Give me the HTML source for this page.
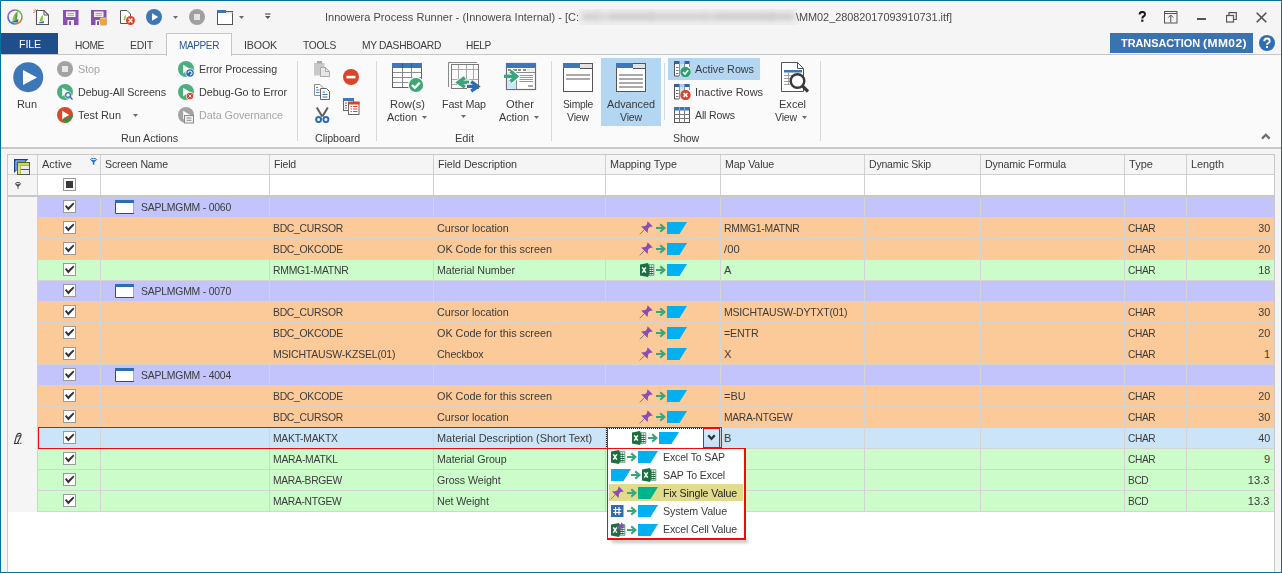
<!DOCTYPE html>
<html><head><meta charset="utf-8"><title>Innowera Process Runner</title>
<style>
html,body{margin:0;padding:0;}
body{width:1282px;height:573px;position:relative;overflow:hidden;background:#f5f5f5;font-family:'Liberation Sans', sans-serif;}
svg{display:block;}
</style></head><body>
<div style="position:absolute;left:0px;top:0px;width:1282px;height:573px;background:#f5f5f5;"></div>
<div style="position:absolute;left:1px;top:55px;width:1280px;height:92px;background:#fafafa;"></div>
<div style="position:absolute;left:1px;top:54px;width:1280px;height:1px;background:#c6c6c6;"></div>
<div style="position:absolute;left:1px;top:147px;width:1280px;height:2px;background:#c8c8c8;"></div>
<div style="position:absolute;left:1px;top:149px;width:1280px;height:423px;background:#f4f4f4;"></div>
<svg style="position:absolute;left:7px;top:9px;" width="16" height="16" viewBox="0 0 16 16"><path d="M8 1 A7 7 0 0 0 1 8" fill="none" stroke="#8e5fd6" stroke-width="1.6"/><path d="M8 1 A7 7 0 0 1 15 8" fill="none" stroke="#5fb157" stroke-width="1.6"/><path d="M15 8 A7 7 0 0 1 8 15" fill="none" stroke="#d9782d" stroke-width="1.6"/><path d="M8 15 A7 7 0 0 1 1 8" fill="none" stroke="#3a78c4" stroke-width="1.6"/><path d="M5.5 12 Q5.2 6.5 10.5 2.5 Q10.4 8 9.5 11.5 Z" fill="#8cc63f"/><path d="M8.5 5 Q9.5 4 10.5 2.5 Q10.4 8 9.5 11.5 L8.2 11.5 Z" fill="#5a9e2f"/><path d="M4.2 13 L11.5 10 L11 13.5 L4.2 13.5 Z" fill="#2e6db4"/></svg>
<svg style="position:absolute;left:33px;top:9px;" width="16" height="16" viewBox="0 0 16 16"><path d="M3.5 1.5 H11 L15.5 6 V15.5 H3.5 Z" fill="#fff" stroke="#555" stroke-width="1.1"/><path d="M11 1.5 V6 H15.5" fill="none" stroke="#555" stroke-width="1"/><path d="M6.8 12.5 Q6.6 8.5 10.2 5.8 Q10.1 9.5 9.4 12.2 Z" fill="#8cc63f"/><path d="M5.8 13.6 L11 12 L10.7 14.2 L5.8 14.2 Z" fill="#2e6db4"/><path d="M0.5 1 L2.5 3 M2.2 0 V1.8 M0 3.5 H1.8 M4.5 0.2 V1.6" stroke="#f07a4a" stroke-width="0.9"/></svg>
<svg style="position:absolute;left:63px;top:10px;" width="16" height="16" viewBox="0 0 16 16"><path d="M0 0 H15.5 V15 H0 Z" fill="#8a4fb4"/><rect x="3" y="1.5" width="9.5" height="5.5" fill="#f0f0f0"/><path d="M4.5 3.5 H11 M4.5 5.3 H11" stroke="#a0a0a0" stroke-width="0.9"/><rect x="4.5" y="10" width="6.5" height="5" fill="#f0f0f0"/><rect x="6" y="11.2" width="2" height="3.8" fill="#8a4fb4"/></svg>
<svg style="position:absolute;left:91px;top:10px;" width="16" height="16" viewBox="0 0 16 16"><path d="M0 0 H15.5 V15 H0 Z" fill="#8a4fb4"/><rect x="3" y="1.5" width="9.5" height="5.5" fill="#f0f0f0"/><path d="M4.5 3.5 H11 M4.5 5.3 H11" stroke="#a0a0a0" stroke-width="0.9"/><rect x="4.5" y="10" width="6.5" height="5" fill="#f0f0f0"/><rect x="6" y="11.2" width="2" height="3.8" fill="#8a4fb4"/><path d="M8.5 9 H16 V10.5 L15 15.5 H9.5 L8.5 10.5 Z" fill="#e7a743"/><path d="M8.5 9 L10 7.5 H14.5 L16 9 Z" fill="#f3c270"/></svg>
<svg style="position:absolute;left:119px;top:9px;" width="16" height="16" viewBox="0 0 16 16"><path d="M1.5 1.5 H8 L11.5 5 V14.5 H1.5 Z" fill="#fff" stroke="#555" stroke-width="1"/><path d="M4.5 11 Q4.5 7.5 7 5.8 Q6.8 8.5 6.3 11 Z" fill="#8cc63f"/><circle cx="11.5" cy="11.5" r="4.5" fill="#d9452b"/><path d="M9.6 9.6 L13.4 13.4 M13.4 9.6 L9.6 13.4" stroke="#fff" stroke-width="1.4"/></svg>
<svg style="position:absolute;left:146px;top:9px;" width="16" height="16" viewBox="0 0 16 16"><circle cx="8" cy="8" r="8" fill="#3d77b7"/><path d="M6 4.2 V11.8 L12.2 8 Z" fill="#fff"/></svg>
<svg style="position:absolute;left:173px;top:16px;" width="5" height="3" viewBox="0 0 5 3"><path d="M0 0 H5 L2.5 3 Z" fill="#6a6a6a"/></svg>
<svg style="position:absolute;left:189px;top:9px;" width="16" height="16" viewBox="0 0 16 16"><circle cx="8" cy="8" r="8" fill="#a0a0a0"/><rect x="5" y="5" width="6" height="6" fill="#e4e4e4"/></svg>
<svg style="position:absolute;left:217px;top:10px;" width="17" height="16" viewBox="0 0 17 16"><rect x="0.5" y="1.5" width="15" height="13" fill="#fff" stroke="#555" stroke-width="1"/><rect x="0" y="0" width="9" height="3" fill="#3d77b7"/><rect x="9" y="2" width="6.5" height="1.5" fill="#ddd"/></svg>
<svg style="position:absolute;left:239px;top:16px;" width="5" height="3" viewBox="0 0 5 3"><path d="M0 0 H5 L2.5 3 Z" fill="#6a6a6a"/></svg>
<svg style="position:absolute;left:265px;top:13px;" width="6" height="7" viewBox="0 0 6 7"><path d="M0 1 H5.5" stroke="#555" stroke-width="1.2"/><path d="M0 3 H5.5 L2.75 6 Z" fill="#555"/></svg>
<div style="position:absolute;left:325px;top:11px;font:11px 'Liberation Sans', sans-serif;line-height:13px;white-space:pre;color:#4a4a4a;transform:scaleX(1.0021);transform-origin:left;letter-spacing:0.007px;">Innowera Process Runner - (Innowera Internal) - [C:</div>
<div style="position:absolute;left:579px;top:9px;width:218px;height:16px;background:#eeeeee;"></div>
<div style="position:absolute;left:579px;top:9px;width:218px;height:16px;background:transparent;overflow:hidden;"></div>
<div style="position:absolute;left:582px;top:13px;width:18px;height:7px;background:#d0d0d0;filter:blur(2.5px);"></div>
<div style="position:absolute;left:596px;top:13px;width:12px;height:7px;background:#d8d8d8;filter:blur(2.5px);"></div>
<div style="position:absolute;left:608px;top:13px;width:46px;height:7px;background:#cdcdcd;filter:blur(2.5px);"></div>
<div style="position:absolute;left:650px;top:13px;width:58px;height:7px;background:#d2d2d2;filter:blur(2.5px);"></div>
<div style="position:absolute;left:704px;top:13px;width:14px;height:7px;background:#d6d6d6;filter:blur(2.5px);"></div>
<div style="position:absolute;left:716px;top:13px;width:58px;height:7px;background:#cccccc;filter:blur(2.5px);"></div>
<div style="position:absolute;left:770px;top:13px;width:24px;height:7px;background:#cfcfcf;filter:blur(2.5px);"></div>
<div style="position:absolute;left:796px;top:11px;font:11px 'Liberation Sans', sans-serif;line-height:13px;white-space:pre;color:#4a4a4a;transform:scaleX(0.9909);transform-origin:left;letter-spacing:-0.035px;">\MM02_28082017093910731.itf]</div>
<svg style="position:absolute;left:1138px;top:11px;" width="9" height="11" viewBox="0 0 9 11"><path d="M1.6 3.6 Q1.6 0.9 4.3 0.9 Q7 0.9 7 3.3 Q7 4.7 5.4 5.5 Q4.3 6.1 4.3 7.4" fill="none" stroke="#1a1a1a" stroke-width="2"/><rect x="3.2" y="8.6" width="2.2" height="2.2" fill="#1a1a1a"/></svg>
<svg style="position:absolute;left:1164px;top:11px;" width="14" height="13" viewBox="0 0 14 13"><rect x="0.5" y="0.5" width="12.5" height="11.5" fill="none" stroke="#555"/><path d="M0.5 2.5 H13" stroke="#555"/><path d="M6.75 4 V11.5 M4.2 6.6 L6.75 4 L9.3 6.6" fill="none" stroke="#555" stroke-width="1"/></svg>
<div style="position:absolute;left:1197px;top:18px;width:9px;height:2px;background:#555;"></div>
<svg style="position:absolute;left:1226px;top:12px;" width="11" height="11" viewBox="0 0 11 11"><rect x="0.5" y="3.5" width="7" height="6.5" fill="none" stroke="#555" stroke-width="1.2"/><path d="M3 3.5 V0.7 H10.3 V7.5 H7.5" fill="none" stroke="#555" stroke-width="1.2"/></svg>
<svg style="position:absolute;left:1256px;top:12px;" width="11" height="11" viewBox="0 0 11 11"><path d="M0.7 0.7 L10.3 10.3 M10.3 0.7 L0.7 10.3" stroke="#505050" stroke-width="1.6"/></svg>
<div style="position:absolute;left:1px;top:33px;width:57px;height:21px;background:#1f4e8d;"></div>
<div style="position:absolute;left:19px;top:38px;font:11px 'Liberation Sans', sans-serif;line-height:13px;white-space:pre;color:#ffffff;transform:scaleX(0.9678);transform-origin:left;letter-spacing:-0.125px;">FILE</div>
<div style="position:absolute;left:75px;top:39px;font:11px 'Liberation Sans', sans-serif;line-height:13px;white-space:pre;color:#3b3b3b;transform:scaleX(0.9254);transform-origin:left;letter-spacing:-0.416px;">HOME</div>
<div style="position:absolute;left:130px;top:39px;font:11px 'Liberation Sans', sans-serif;line-height:13px;white-space:pre;color:#3b3b3b;transform:scaleX(0.9498);transform-origin:left;letter-spacing:-0.212px;">EDIT</div>
<div style="position:absolute;left:166px;top:33px;width:66px;height:23px;box-sizing:border-box;border:1px solid #c6c6c6;background:#fafafa;border-bottom:none;"></div>
<div style="position:absolute;left:179px;top:39px;font:11px 'Liberation Sans', sans-serif;line-height:13px;white-space:pre;color:#2b5797;transform:scaleX(0.9140);transform-origin:left;letter-spacing:-0.451px;">MAPPER</div>
<div style="position:absolute;left:244px;top:39px;font:11px 'Liberation Sans', sans-serif;line-height:13px;white-space:pre;color:#3b3b3b;transform:scaleX(0.9679);transform-origin:left;letter-spacing:-0.150px;">IBOOK</div>
<div style="position:absolute;left:303px;top:39px;font:11px 'Liberation Sans', sans-serif;line-height:13px;white-space:pre;color:#3b3b3b;transform:scaleX(0.9322);transform-origin:left;letter-spacing:-0.339px;">TOOLS</div>
<div style="position:absolute;left:362px;top:39px;font:11px 'Liberation Sans', sans-serif;line-height:13px;white-space:pre;color:#3b3b3b;transform:scaleX(0.9307);transform-origin:left;letter-spacing:-0.347px;">MY DASHBOARD</div>
<div style="position:absolute;left:466px;top:39px;font:11px 'Liberation Sans', sans-serif;line-height:13px;white-space:pre;color:#3b3b3b;transform:scaleX(0.9196);transform-origin:left;letter-spacing:-0.391px;">HELP</div>
<div style="position:absolute;left:1110px;top:33px;width:143px;height:20px;background:#3a73b1;"></div>
<div style="position:absolute;left:1121px;top:37px;font:bold 11px 'Liberation Sans', sans-serif;line-height:13px;white-space:pre;color:#ffffff;transform:scaleX(0.9920);transform-origin:left;letter-spacing:-0.039px;">TRANSACTION</div>
<div style="position:absolute;left:1203px;top:37px;font:bold 11px 'Liberation Sans', sans-serif;line-height:13px;white-space:pre;color:#ffffff;transform:scaleX(1.0938);transform-origin:left;letter-spacing:0.389px;">(MM02)</div>
<svg style="position:absolute;left:1259px;top:35px;" width="16" height="16" viewBox="0 0 16 16"><circle cx="8" cy="8" r="8" fill="#2f6db3"/><path d="M5.3 6.2 Q5.3 3.5 8 3.5 Q10.7 3.5 10.7 5.9 Q10.7 7.3 9.1 8.1 Q8 8.7 8 9.8" fill="none" stroke="#fff" stroke-width="1.9"/><rect x="7" y="11" width="2" height="2" fill="#fff"/></svg>
<div style="position:absolute;left:601px;top:58px;width:60px;height:68px;background:#b3d6f2;"></div>
<div style="position:absolute;left:668px;top:58px;width:92px;height:22px;background:#b3d6f2;"></div>
<svg style="position:absolute;left:13px;top:62px;" width="31" height="31" viewBox="0 0 31 31"><circle cx="15.2" cy="15.2" r="15" fill="#3d77b7"/><path d="M10 8 V23 L24 15.5 Z" fill="#fff"/></svg>
<div style="position:absolute;left:17px;top:98px;font:11px 'Liberation Sans', sans-serif;line-height:13px;white-space:pre;color:#3b3b3b;transform:scaleX(0.9944);transform-origin:left;letter-spacing:-0.025px;">Run</div>
<svg style="position:absolute;left:57px;top:61px;" width="16" height="16" viewBox="0 0 16 16"><circle cx="8" cy="8" r="8" fill="#a3a3a3"/><rect x="5" y="5" width="6" height="6" fill="#e8e8e8"/></svg>
<svg style="position:absolute;left:57px;top:84px;" width="17" height="17" viewBox="0 0 17 17"><circle cx="8" cy="8" r="8" fill="#4cae7f"/><path d="M5.2 3.8 V12.4 L8 10.2 L12.2 8 Z" fill="#fff"/><circle cx="11" cy="11" r="3.5" fill="#fff"/><circle cx="11" cy="11" r="2.4" fill="none" stroke="#2f6db3" stroke-width="1.2"/><path d="M12.8 12.8 L15.5 15.5" stroke="#2f6db3" stroke-width="1.5"/></svg>
<svg style="position:absolute;left:57px;top:107px;" width="17" height="17" viewBox="0 0 17 17"><circle cx="8" cy="8" r="8" fill="#d64a2a"/><path d="M5.2 3.8 V12.4 L8 10.2 L12.2 8 Z" fill="#fff"/><path d="M7 11.5 L9.5 14.5 L15.5 8.5" fill="none" stroke="#1e9a4a" stroke-width="2.2"/></svg>
<svg style="position:absolute;left:178px;top:61px;" width="17" height="17" viewBox="0 0 17 17"><circle cx="8" cy="8" r="8" fill="#4cae7f"/><path d="M5.2 3.8 V12.4 L8 10.2 L12.2 8 Z" fill="#fff"/><circle cx="12" cy="12" r="4.6" fill="#fff"/><circle cx="12" cy="12" r="3.8" fill="#2f6db3"/><path d="M10 12 A2 2 0 1 1 12 14" fill="none" stroke="#fff" stroke-width="1"/></svg>
<svg style="position:absolute;left:178px;top:84px;" width="17" height="17" viewBox="0 0 17 17"><circle cx="8" cy="8" r="8" fill="#4cae7f"/><path d="M5.2 3.8 V12.4 L8 10.2 L12.2 8 Z" fill="#fff"/><circle cx="12" cy="12" r="4" fill="#fff"/><circle cx="12" cy="12" r="3.3" fill="#d9452b"/><path d="M10.6 10.6 L13.4 13.4 M13.4 10.6 L10.6 13.4" stroke="#fff" stroke-width="1"/></svg>
<svg style="position:absolute;left:178px;top:107px;" width="17" height="17" viewBox="0 0 17 17"><circle cx="8" cy="8" r="8" fill="#a3a3a3"/><path d="M5.2 3.8 V12.4 L8 10.2 L12.2 8 Z" fill="#fff"/><rect x="6.5" y="8.5" width="9" height="7.5" fill="#f3f3f3" stroke="#8a8a8a" stroke-width="1"/><path d="M8.5 11 H13.5 M8.5 13.3 H13.5" stroke="#8a8a8a" stroke-width="1"/></svg>
<svg style="position:absolute;left:314px;top:61px;" width="17" height="16" viewBox="0 0 17 16"><rect x="0" y="2" width="10.5" height="12.5" fill="#c9c9c9"/><rect x="3" y="0" width="5" height="2.5" fill="#a8a8a8"/><path d="M6.5 6.5 H11.5 L15.5 10.5 V15.5 H6.5 Z" fill="#e6e6e6" stroke="#aaaaaa"/><path d="M11.5 6.5 V10.5 H15.5" fill="none" stroke="#aaaaaa"/></svg>
<svg style="position:absolute;left:314px;top:84px;" width="17" height="17" viewBox="0 0 17 17"><path d="M0.5 0.5 H6 L9 3.5 V11.5 H0.5 Z" fill="#fff" stroke="#8a8a8a"/><path d="M2 3.5 H4 M2 6 H5.5 M2 8.5 H5.5" stroke="#4a86cf" stroke-width="1"/><path d="M6.5 4.5 H12.5 L15.5 7.5 V15.5 H6.5 Z" fill="#fff" stroke="#666"/><path d="M8.5 8 H11 M8.5 10.5 H13.5 M8.5 13 H13.5" stroke="#3d77b7" stroke-width="1.1"/></svg>
<svg style="position:absolute;left:315px;top:107px;" width="15" height="16" viewBox="0 0 15 16"><path d="M1.8 0.5 L7.2 9.5 M12.8 0.5 L7.4 9.5" stroke="#5f5f5f" stroke-width="2"/><circle cx="3.6" cy="12.6" r="2.5" fill="none" stroke="#2f6db3" stroke-width="2"/><circle cx="10.9" cy="12.6" r="2.5" fill="none" stroke="#2f6db3" stroke-width="2"/></svg>
<svg style="position:absolute;left:343px;top:69px;" width="16" height="16" viewBox="0 0 16 16"><circle cx="8" cy="8" r="8" fill="#d9452b"/><rect x="3.5" y="6.8" width="9" height="2.6" fill="#fff"/></svg>
<svg style="position:absolute;left:343px;top:98px;" width="17" height="17" viewBox="0 0 17 17"><rect x="0.5" y="0.5" width="10" height="12" fill="#fff" stroke="#666"/><rect x="0" y="0" width="11" height="3" fill="#3d77b7"/><path d="M2 5 H4 M2 7.5 H4 M2 10 H4" stroke="#666"/><rect x="5.5" y="4.5" width="10.5" height="12" fill="#fff" stroke="#666"/><rect x="5" y="3.5" width="11.5" height="3" fill="#d9452b"/><path d="M7.5 8.5 H8.8 M10 8.5 H14.5 M7.5 11 H8.8 M10 11 H14.5 M7.5 13.5 H8.8 M10 13.5 H14.5" stroke="#d9452b" stroke-width="1.1"/></svg>
<svg style="position:absolute;left:674px;top:61px;" width="17" height="16" viewBox="0 0 17 16"><rect x="0" y="0" width="16" height="15" fill="#fff"/><rect x="5" y="0" width="6" height="15" fill="#cfe3f7"/><rect x="0" y="0" width="5" height="3" fill="#2f62a8"/><rect x="11" y="0" width="5" height="3" fill="#2f62a8"/><rect x="5" y="0" width="6" height="3" fill="#a9cbee"/><path d="M0.5 0 V15 H5" fill="none" stroke="#555" stroke-width="1"/><path d="M5.5 0 V15 M10.5 0 V9 M15.5 0 V6" stroke="#6f95c6" stroke-width="1"/><path d="M2 6.5 H4.5 M2 9.5 H4.5 M2 12.5 H4.5" stroke="#777" stroke-width="1"/><circle cx="11.5" cy="11" r="5.2" fill="#2fa06a"/><path d="M9 11 L11 13 L14.2 9.2" fill="none" stroke="#fff" stroke-width="1.6"/></svg>
<svg style="position:absolute;left:674px;top:84px;" width="17" height="16" viewBox="0 0 17 16"><rect x="0" y="0" width="16" height="15" fill="#fff"/><rect x="5" y="0" width="6" height="15" fill="#cfe3f7"/><rect x="0" y="0" width="5" height="3" fill="#2f62a8"/><rect x="11" y="0" width="5" height="3" fill="#2f62a8"/><rect x="5" y="0" width="6" height="3" fill="#a9cbee"/><path d="M0.5 0 V15 H5" fill="none" stroke="#555" stroke-width="1"/><path d="M5.5 0 V15 M10.5 0 V9 M15.5 0 V6" stroke="#6f95c6" stroke-width="1"/><path d="M2 6.5 H4.5 M2 9.5 H4.5 M2 12.5 H4.5" stroke="#777" stroke-width="1"/><circle cx="11.5" cy="11" r="5.2" fill="#d9452b"/><path d="M9.6 9.1 L13.4 12.9 M13.4 9.1 L9.6 12.9" stroke="#fff" stroke-width="1.5"/></svg>
<svg style="position:absolute;left:674px;top:107px;" width="17" height="16" viewBox="0 0 17 16"><rect x="0.5" y="0.5" width="15" height="15" fill="#fff" stroke="#555"/><rect x="0" y="0" width="16" height="3.5" fill="#3d77b7"/><path d="M0 7.5 H16 M0 11.5 H16 M5.5 3 V16 M10.5 3 V16" stroke="#777" stroke-width="1"/><path d="M5.5 0 V3.5 M10.5 0 V3.5" stroke="#7fa9d8" stroke-width="1"/></svg>
<div style="position:absolute;left:78px;top:63px;font:11px 'Liberation Sans', sans-serif;line-height:13px;white-space:pre;color:#a6a6a6;transform:scaleX(0.9829);transform-origin:left;letter-spacing:-0.065px;">Stop</div>
<div style="position:absolute;left:78px;top:86px;font:11px 'Liberation Sans', sans-serif;line-height:13px;white-space:pre;color:#3b3b3b;transform:scaleX(0.9755);transform-origin:left;letter-spacing:-0.089px;">Debug-All Screens</div>
<div style="position:absolute;left:78px;top:109px;font:11px 'Liberation Sans', sans-serif;line-height:13px;white-space:pre;color:#3b3b3b;transform:scaleX(0.9942);transform-origin:left;letter-spacing:-0.021px;">Test Run</div>
<svg style="position:absolute;left:133px;top:114px;" width="5" height="3" viewBox="0 0 5 3"><path d="M0 0 H5 L2.5 3 Z" fill="#6a6a6a"/></svg>
<div style="position:absolute;left:121px;top:132px;font:11px 'Liberation Sans', sans-serif;line-height:13px;white-space:pre;color:#3b3b3b;transform:scaleX(0.9825);transform-origin:left;letter-spacing:-0.062px;">Run Actions</div>
<div style="position:absolute;left:199px;top:63px;font:11px 'Liberation Sans', sans-serif;line-height:13px;white-space:pre;color:#3b3b3b;transform:scaleX(0.9710);transform-origin:left;letter-spacing:-0.099px;">Error Processing</div>
<div style="position:absolute;left:199px;top:86px;font:11px 'Liberation Sans', sans-serif;line-height:13px;white-space:pre;color:#3b3b3b;transform:scaleX(0.9834);transform-origin:left;letter-spacing:-0.059px;">Debug-Go to Error</div>
<div style="position:absolute;left:199px;top:109px;font:11px 'Liberation Sans', sans-serif;line-height:13px;white-space:pre;color:#a6a6a6;transform:scaleX(0.9845);transform-origin:left;letter-spacing:-0.060px;">Data Governance</div>
<div style="position:absolute;left:297px;top:61px;width:1px;height:80px;background:#d8d8d8;"></div>
<div style="position:absolute;left:376px;top:61px;width:1px;height:80px;background:#d8d8d8;"></div>
<div style="position:absolute;left:551px;top:61px;width:1px;height:80px;background:#d8d8d8;"></div>
<div style="position:absolute;left:820px;top:61px;width:1px;height:80px;background:#d8d8d8;"></div>
<div style="position:absolute;left:664px;top:63px;width:1px;height:57px;background:#d8d8d8;"></div>
<div style="position:absolute;left:315px;top:132px;font:11px 'Liberation Sans', sans-serif;line-height:13px;white-space:pre;color:#3b3b3b;transform:scaleX(0.9731);transform-origin:left;letter-spacing:-0.094px;">Clipboard</div>
<div style="position:absolute;left:390px;top:98px;font:11px 'Liberation Sans', sans-serif;line-height:13px;white-space:pre;color:#3b3b3b;transform:scaleX(1.0027);transform-origin:left;letter-spacing:0.010px;">Row(s)</div>
<div style="position:absolute;left:387px;top:111px;font:11px 'Liberation Sans', sans-serif;line-height:13px;white-space:pre;color:#3b3b3b;transform:scaleX(0.9886);transform-origin:left;letter-spacing:-0.039px;">Action</div>
<svg style="position:absolute;left:422px;top:116px;" width="5" height="3" viewBox="0 0 5 3"><path d="M0 0 H5 L2.5 3 Z" fill="#6a6a6a"/></svg>
<div style="position:absolute;left:442px;top:98px;font:11px 'Liberation Sans', sans-serif;line-height:13px;white-space:pre;color:#3b3b3b;transform:scaleX(0.9755);transform-origin:left;letter-spacing:-0.094px;">Fast Map</div>
<svg style="position:absolute;left:461px;top:115px;" width="5" height="3" viewBox="0 0 5 3"><path d="M0 0 H5 L2.5 3 Z" fill="#6a6a6a"/></svg>
<div style="position:absolute;left:455px;top:132px;font:11px 'Liberation Sans', sans-serif;line-height:13px;white-space:pre;color:#3b3b3b;transform:scaleX(1.0010);transform-origin:left;letter-spacing:0.003px;">Edit</div>
<div style="position:absolute;left:506px;top:98px;font:11px 'Liberation Sans', sans-serif;line-height:13px;white-space:pre;color:#3b3b3b;transform:scaleX(1.0105);transform-origin:left;letter-spacing:0.039px;">Other</div>
<div style="position:absolute;left:499px;top:111px;font:11px 'Liberation Sans', sans-serif;line-height:13px;white-space:pre;color:#3b3b3b;transform:scaleX(0.9886);transform-origin:left;letter-spacing:-0.039px;">Action</div>
<svg style="position:absolute;left:534px;top:116px;" width="5" height="3" viewBox="0 0 5 3"><path d="M0 0 H5 L2.5 3 Z" fill="#6a6a6a"/></svg>
<div style="position:absolute;left:563px;top:98px;font:11px 'Liberation Sans', sans-serif;line-height:13px;white-space:pre;color:#3b3b3b;transform:scaleX(0.9338);transform-origin:left;letter-spacing:-0.250px;">Simple</div>
<div style="position:absolute;left:567px;top:111px;font:11px 'Liberation Sans', sans-serif;line-height:13px;white-space:pre;color:#3b3b3b;transform:scaleX(0.9574);transform-origin:left;letter-spacing:-0.169px;">View</div>
<div style="position:absolute;left:607px;top:98px;font:11px 'Liberation Sans', sans-serif;line-height:13px;white-space:pre;color:#3b3b3b;transform:scaleX(0.9885);transform-origin:left;letter-spacing:-0.047px;">Advanced</div>
<div style="position:absolute;left:620px;top:111px;font:11px 'Liberation Sans', sans-serif;line-height:13px;white-space:pre;color:#3b3b3b;transform:scaleX(0.9574);transform-origin:left;letter-spacing:-0.169px;">View</div>
<div style="position:absolute;left:695px;top:63px;font:11px 'Liberation Sans', sans-serif;line-height:13px;white-space:pre;color:#3b3b3b;transform:scaleX(0.9847);transform-origin:left;letter-spacing:-0.056px;">Active Rows</div>
<div style="position:absolute;left:695px;top:86px;font:11px 'Liberation Sans', sans-serif;line-height:13px;white-space:pre;color:#3b3b3b;transform:scaleX(0.9958);transform-origin:left;letter-spacing:-0.015px;">Inactive Rows</div>
<div style="position:absolute;left:695px;top:109px;font:11px 'Liberation Sans', sans-serif;line-height:13px;white-space:pre;color:#3b3b3b;transform:scaleX(0.9603);transform-origin:left;letter-spacing:-0.143px;">All Rows</div>
<div style="position:absolute;left:673px;top:132px;font:11px 'Liberation Sans', sans-serif;line-height:13px;white-space:pre;color:#3b3b3b;transform:scaleX(0.9662);transform-origin:left;letter-spacing:-0.156px;">Show</div>
<div style="position:absolute;left:779px;top:98px;font:11px 'Liberation Sans', sans-serif;line-height:13px;white-space:pre;color:#3b3b3b;transform:scaleX(1.0021);transform-origin:left;letter-spacing:0.007px;">Excel</div>
<div style="position:absolute;left:775px;top:111px;font:11px 'Liberation Sans', sans-serif;line-height:13px;white-space:pre;color:#3b3b3b;transform:scaleX(0.9574);transform-origin:left;letter-spacing:-0.169px;">View</div>
<svg style="position:absolute;left:802px;top:116px;" width="5" height="3" viewBox="0 0 5 3"><path d="M0 0 H5 L2.5 3 Z" fill="#6a6a6a"/></svg>
<svg style="position:absolute;left:388px;top:58px;" width="40" height="38" viewBox="0 0 40 38"><rect x="4.5" y="5.5" width="29" height="24" fill="#fff" stroke="#626262" stroke-width="1"/><rect x="4" y="5" width="30" height="5" fill="#3d77b7"/><path d="M5 14.5 H33 M5 19.5 H33 M5 24.5 H33 M14.5 10 V29 M23.5 10 V29" stroke="#8c8c8c" stroke-width="1"/><path d="M14.5 5 V10 M23.5 5 V10" stroke="#2b5d99" stroke-width="1"/><circle cx="28" cy="27" r="8.2" fill="#fafafa"/><circle cx="28" cy="27" r="7.1" fill="#40a574"/><path d="M24 27 L26.8 29.8 L31.8 24.6" fill="none" stroke="#fff" stroke-width="2.4"/></svg>
<svg style="position:absolute;left:444px;top:58px;" width="40" height="38" viewBox="0 0 40 38"><path d="M4.5 29 V4.5 H33" fill="none" stroke="#8a8a8a" stroke-width="1"/><rect x="7.5" y="6.5" width="27" height="24" fill="#fafafa" stroke="#7a7a7a" stroke-width="1"/><path d="M8 11.5 H34 M8 21.5 H34 M8 26.5 H22 M14.5 7 V21 M22.5 7 V21 M29.5 7 V21" stroke="#a9a9a9" stroke-width="1"/><path d="M13 24.4 H25.5" stroke="#fafafa" stroke-width="6"/><path d="M15 24.4 H25" stroke="#3aa57b" stroke-width="3.6"/><path d="M20.8 19.6 L14.2 24.4 L20.8 29.2" fill="none" stroke="#3aa57b" stroke-width="3.4" stroke-linejoin="miter"/><path d="M23 28.4 H32.5" stroke="#fafafa" stroke-width="6"/><path d="M23 28.4 H32" stroke="#2f6db3" stroke-width="3.2"/><path d="M27.2 23.6 L33.8 28.4 L27.2 33.2" fill="none" stroke="#2f6db3" stroke-width="3.4" stroke-linejoin="miter"/></svg>
<svg style="position:absolute;left:500px;top:58px;" width="40" height="38" viewBox="0 0 40 38"><rect x="6.5" y="5.5" width="29" height="26" fill="#fff" stroke="#6e6e6e" stroke-width="1.2"/><rect x="6" y="5" width="30" height="5" fill="#3d77b7"/><path d="M8 12 H11 M13 12 H17 M18 12 H21 M23 12 H26" stroke="#6a6a6a" stroke-width="1.4"/><rect x="27" y="11" width="8" height="2.5" fill="#eaeaea"/><rect x="7" y="14.5" width="9.5" height="16.5" fill="#cde6f8"/><path d="M16 14.5 H35 M16.5 14.5 V31" stroke="#8a8a8a" stroke-width="1"/><path d="M19.5 17.5 H33 M19.5 19.5 H33 M19.5 21.5 H33 M19.5 23.5 H33" stroke="#8a8a8a" stroke-width="0.9"/><rect x="28" y="27" width="5" height="2" fill="#aaaaaa"/><path d="M4 18.4 H14" stroke="#3aa57b" stroke-width="3.2"/><path d="M10.5 13.2 L16.5 18.4 L10.5 23.6" fill="none" stroke="#fff" stroke-width="5.5"/><path d="M4 18.4 H14" stroke="#3aa57b" stroke-width="3.2"/><path d="M10.5 13.2 L16.5 18.4 L10.5 23.6" fill="none" stroke="#3aa57b" stroke-width="3.6"/></svg>
<svg style="position:absolute;left:562px;top:62px;" width="32" height="31" viewBox="0 0 32 31"><rect x="1.5" y="1.5" width="29" height="28" fill="#fff" stroke="#555"/><rect x="1" y="1" width="17" height="5" fill="#3d77b7"/><rect x="18" y="2" width="12" height="4" fill="#e2e2e2"/><path d="M18 6.5 H30.5" stroke="#555" stroke-width="1"/><path d="M4 13 H28 M4 17 H28" stroke="#aaa" stroke-width="2"/></svg>
<svg style="position:absolute;left:615px;top:62px;" width="32" height="31" viewBox="0 0 32 31"><rect x="1.5" y="1.5" width="29" height="28" fill="#fff" stroke="#555"/><rect x="1" y="1" width="17" height="5" fill="#3d77b7"/><rect x="18" y="2" width="12" height="4" fill="#e2e2e2"/><path d="M18 6.5 H30.5" stroke="#555" stroke-width="1"/><path d="M4 13 H28 M4 17 H28 M4 21 H28 M4 25 H28" stroke="#aaa" stroke-width="2"/></svg>
<svg style="position:absolute;left:780px;top:62px;" width="31" height="32" viewBox="0 0 31 32"><path d="M1.5 0.5 H17.5 L23.5 6.5 V29.5 H1.5 Z" fill="#fff" stroke="#555"/><path d="M17.5 0.5 V6.5 H23.5" fill="none" stroke="#555"/><rect x="4" y="8" width="18" height="2.5" fill="#3d77b7"/><path d="M4 13.5 H12 M4 16.5 H10 M4 19.5 H10 M4 22.5 H10 M8.5 10.5 V23" stroke="#9a9a9a" stroke-width="0.9"/><circle cx="17.5" cy="19" r="6.8" fill="#fff" stroke="#3a3a3a" stroke-width="2.4"/><path d="M22.3 23.8 L28 29.5" stroke="#3a3a3a" stroke-width="3.2"/></svg>
<svg style="position:absolute;left:1261px;top:133px;" width="10" height="7" viewBox="0 0 10 7"><path d="M1 5.6 L4.8 1.8 L8.6 5.6" fill="none" stroke="#6a6a6a" stroke-width="2.2"/></svg>
<div style="position:absolute;left:7px;top:154px;width:1268px;height:418px;background:#ffffff;"></div>
<div style="position:absolute;left:8px;top:155px;width:1266px;height:19px;background:#f5f5f5;"></div>
<div style="position:absolute;left:8px;top:175px;width:1266px;height:20px;background:#ffffff;"></div>
<div style="position:absolute;left:8px;top:175px;width:29px;height:20px;background:#f5f5f5;"></div>
<div style="position:absolute;left:7px;top:154px;width:1268px;height:1px;background:#c8c8c8;"></div>
<div style="position:absolute;left:7px;top:154px;width:1px;height:418px;background:#c8c8c8;"></div>
<div style="position:absolute;left:1274px;top:154px;width:1px;height:418px;background:#c8c8c8;"></div>
<div style="position:absolute;left:8px;top:174px;width:1266px;height:1px;background:#d0d0d0;"></div>
<div style="position:absolute;left:8px;top:195px;width:1266px;height:2px;background:#c8c8c8;"></div>
<div style="position:absolute;left:42px;top:158px;font:11px 'Liberation Sans', sans-serif;line-height:13px;white-space:pre;color:#3b3b3b;transform:scaleX(1.0006);transform-origin:left;letter-spacing:0.002px;">Active</div>
<div style="position:absolute;left:105px;top:158px;font:11px 'Liberation Sans', sans-serif;line-height:13px;white-space:pre;color:#3b3b3b;transform:scaleX(0.9615);transform-origin:left;letter-spacing:-0.158px;">Screen Name</div>
<div style="position:absolute;left:274px;top:158px;font:11px 'Liberation Sans', sans-serif;line-height:13px;white-space:pre;color:#3b3b3b;transform:scaleX(0.9529);transform-origin:left;letter-spacing:-0.151px;">Field</div>
<div style="position:absolute;left:438px;top:158px;font:11px 'Liberation Sans', sans-serif;line-height:13px;white-space:pre;color:#3b3b3b;transform:scaleX(0.9784);transform-origin:left;letter-spacing:-0.069px;">Field Description</div>
<div style="position:absolute;left:610px;top:158px;font:11px 'Liberation Sans', sans-serif;line-height:13px;white-space:pre;color:#3b3b3b;transform:scaleX(0.9833);transform-origin:left;letter-spacing:-0.064px;">Mapping Type</div>
<div style="position:absolute;left:725px;top:158px;font:11px 'Liberation Sans', sans-serif;line-height:13px;white-space:pre;color:#3b3b3b;transform:scaleX(0.9674);transform-origin:left;letter-spacing:-0.126px;">Map Value</div>
<div style="position:absolute;left:869px;top:158px;font:11px 'Liberation Sans', sans-serif;line-height:13px;white-space:pre;color:#3b3b3b;transform:scaleX(0.9524);transform-origin:left;letter-spacing:-0.179px;">Dynamic Skip</div>
<div style="position:absolute;left:985px;top:158px;font:11px 'Liberation Sans', sans-serif;line-height:13px;white-space:pre;color:#3b3b3b;transform:scaleX(0.9634);transform-origin:left;letter-spacing:-0.141px;">Dynamic Formula</div>
<div style="position:absolute;left:1129px;top:158px;font:11px 'Liberation Sans', sans-serif;line-height:13px;white-space:pre;color:#3b3b3b;transform:scaleX(1.0035);transform-origin:left;letter-spacing:0.014px;">Type</div>
<div style="position:absolute;left:1191px;top:158px;font:11px 'Liberation Sans', sans-serif;line-height:13px;white-space:pre;color:#3b3b3b;transform:scaleX(0.9883);transform-origin:left;letter-spacing:-0.044px;">Length</div>
<div style="position:absolute;left:38px;top:197px;width:1236px;height:20px;background:#c4c4fc;"></div>
<div style="position:absolute;left:8px;top:197px;width:29px;height:21px;background:#f5f5f5;"></div>
<div style="position:absolute;left:38px;top:217px;width:1236px;height:1px;background:#d4d4d4;"></div>
<svg style="position:absolute;left:63px;top:200px;" width="13" height="13" viewBox="0 0 13 13"><rect x="0.5" y="0.5" width="12" height="12" fill="#fff" stroke="#9a9a9a"/><path d="M1.9 6.2 L3.4 5.1 L5.2 7.3 L10.3 2.4 L11.3 4.1 L5.3 10.5 Z" fill="#353535"/></svg>
<svg style="position:absolute;left:115px;top:200px;" width="20" height="14" viewBox="0 0 20 14"><rect x="0" y="0" width="19" height="14" fill="#fff"/><path d="M0.5 0 V13.5 H19" fill="none" stroke="#4a4a4a" stroke-width="1"/><path d="M18.5 3 V13" stroke="#a8a8b8" stroke-width="1"/><rect x="0" y="0" width="19" height="3" fill="#2f6db3"/></svg>
<div style="position:absolute;left:141px;top:201px;font:11px 'Liberation Sans', sans-serif;line-height:13px;white-space:pre;color:#3b3b3b;transform:scaleX(0.9477);transform-origin:left;letter-spacing:-0.231px;">SAPLMGMM - 0060</div>
<div style="position:absolute;left:38px;top:218px;width:1236px;height:20px;background:#fcca98;"></div>
<div style="position:absolute;left:8px;top:218px;width:29px;height:21px;background:#f5f5f5;"></div>
<div style="position:absolute;left:38px;top:238px;width:1236px;height:1px;background:#d4d4d4;"></div>
<svg style="position:absolute;left:63px;top:221px;" width="13" height="13" viewBox="0 0 13 13"><rect x="0.5" y="0.5" width="12" height="12" fill="#fff" stroke="#9a9a9a"/><path d="M1.9 6.2 L3.4 5.1 L5.2 7.3 L10.3 2.4 L11.3 4.1 L5.3 10.5 Z" fill="#353535"/></svg>
<div style="position:absolute;left:273px;top:222px;font:11px 'Liberation Sans', sans-serif;line-height:13px;white-space:pre;color:#3b3b3b;transform:scaleX(0.9436);transform-origin:left;letter-spacing:-0.292px;">BDC_CURSOR</div>
<div style="position:absolute;left:437px;top:222px;font:11px 'Liberation Sans', sans-serif;line-height:13px;white-space:pre;color:#3b3b3b;transform:scaleX(0.9805);transform-origin:left;letter-spacing:-0.064px;">Cursor location</div>
<svg style="position:absolute;left:639px;top:221px;" width="50" height="14" viewBox="0 0 50 14"><g transform="translate(11.2,2.85) rotate(45) scale(1.0)"><path d="M0 8.2 L0 14.8" stroke="#777" stroke-width="0.9"/><path d="M-3.7 0 H3.7 L2 2.6 V5 L4.6 8.2 H-4.6 L-2 5 V2.6 Z" fill="#8b4fb3"/></g><g transform="translate(17,3.0)"><path d="M0 4 H8.2 M4.2 0.4 L8.6 4 L4.2 7.6" fill="none" stroke="#3aa57b" stroke-width="2.1" stroke-linejoin="round" stroke-linecap="butt"/></g><path transform="translate(28,1)" d="M0 0 H20 L12.5 12 H0 Z" fill="#00b0f0"/></svg>
<div style="position:absolute;left:724px;top:222px;font:11px 'Liberation Sans', sans-serif;line-height:13px;white-space:pre;color:#3b3b3b;transform:scaleX(0.9446);transform-origin:left;letter-spacing:-0.281px;">RMMG1-MATNR</div>
<div style="position:absolute;left:1128px;top:222px;font:11px 'Liberation Sans', sans-serif;line-height:13px;white-space:pre;color:#3b3b3b;transform:scaleX(0.9236);transform-origin:left;letter-spacing:-0.402px;">CHAR</div>
<div style="position:absolute;right:12px;top:222px;font:11px 'Liberation Sans', sans-serif;line-height:13px;white-space:pre;color:#3b3b3b;transform:scaleX(0.9819);transform-origin:right;letter-spacing:-0.074px;">30</div>
<div style="position:absolute;left:38px;top:239px;width:1236px;height:20px;background:#fcca98;"></div>
<div style="position:absolute;left:8px;top:239px;width:29px;height:21px;background:#f5f5f5;"></div>
<div style="position:absolute;left:38px;top:259px;width:1236px;height:1px;background:#d4d4d4;"></div>
<svg style="position:absolute;left:63px;top:242px;" width="13" height="13" viewBox="0 0 13 13"><rect x="0.5" y="0.5" width="12" height="12" fill="#fff" stroke="#9a9a9a"/><path d="M1.9 6.2 L3.4 5.1 L5.2 7.3 L10.3 2.4 L11.3 4.1 L5.3 10.5 Z" fill="#353535"/></svg>
<div style="position:absolute;left:273px;top:243px;font:11px 'Liberation Sans', sans-serif;line-height:13px;white-space:pre;color:#3b3b3b;transform:scaleX(0.9435);transform-origin:left;letter-spacing:-0.293px;">BDC_OKCODE</div>
<div style="position:absolute;left:437px;top:243px;font:11px 'Liberation Sans', sans-serif;line-height:13px;white-space:pre;color:#3b3b3b;transform:scaleX(0.9873);transform-origin:left;letter-spacing:-0.043px;">OK Code for this screen</div>
<svg style="position:absolute;left:639px;top:242px;" width="50" height="14" viewBox="0 0 50 14"><g transform="translate(11.2,2.85) rotate(45) scale(1.0)"><path d="M0 8.2 L0 14.8" stroke="#777" stroke-width="0.9"/><path d="M-3.7 0 H3.7 L2 2.6 V5 L4.6 8.2 H-4.6 L-2 5 V2.6 Z" fill="#8b4fb3"/></g><g transform="translate(17,3.0)"><path d="M0 4 H8.2 M4.2 0.4 L8.6 4 L4.2 7.6" fill="none" stroke="#3aa57b" stroke-width="2.1" stroke-linejoin="round" stroke-linecap="butt"/></g><path transform="translate(28,1)" d="M0 0 H20 L12.5 12 H0 Z" fill="#00b0f0"/></svg>
<div style="position:absolute;left:724px;top:243px;font:11px 'Liberation Sans', sans-serif;line-height:13px;white-space:pre;color:#3b3b3b;transform:scaleX(1.0192);transform-origin:left;letter-spacing:0.065px;">/00</div>
<div style="position:absolute;left:1128px;top:243px;font:11px 'Liberation Sans', sans-serif;line-height:13px;white-space:pre;color:#3b3b3b;transform:scaleX(0.9236);transform-origin:left;letter-spacing:-0.402px;">CHAR</div>
<div style="position:absolute;right:12px;top:243px;font:11px 'Liberation Sans', sans-serif;line-height:13px;white-space:pre;color:#3b3b3b;transform:scaleX(0.9819);transform-origin:right;letter-spacing:-0.074px;">20</div>
<div style="position:absolute;left:38px;top:260px;width:1236px;height:20px;background:#ccfcca;"></div>
<div style="position:absolute;left:8px;top:260px;width:29px;height:21px;background:#f5f5f5;"></div>
<div style="position:absolute;left:38px;top:280px;width:1236px;height:1px;background:#d4d4d4;"></div>
<svg style="position:absolute;left:63px;top:263px;" width="13" height="13" viewBox="0 0 13 13"><rect x="0.5" y="0.5" width="12" height="12" fill="#fff" stroke="#9a9a9a"/><path d="M1.9 6.2 L3.4 5.1 L5.2 7.3 L10.3 2.4 L11.3 4.1 L5.3 10.5 Z" fill="#353535"/></svg>
<div style="position:absolute;left:273px;top:264px;font:11px 'Liberation Sans', sans-serif;line-height:13px;white-space:pre;color:#3b3b3b;transform:scaleX(0.9446);transform-origin:left;letter-spacing:-0.281px;">RMMG1-MATNR</div>
<div style="position:absolute;left:437px;top:264px;font:11px 'Liberation Sans', sans-serif;line-height:13px;white-space:pre;color:#3b3b3b;transform:scaleX(0.9743);transform-origin:left;letter-spacing:-0.093px;">Material Number</div>
<svg style="position:absolute;left:639px;top:263px;" width="50" height="14" viewBox="0 0 50 14"><g transform="translate(1,0)"><path d="M0 1.5 L8 0 L8.6 1.4 H14.2 V12.6 H8.6 L8 14 L0 12.5 Z" fill="#1e6e42"/><rect x="9" y="2.2" width="4.6" height="9.6" fill="#ffffff"/><path d="M9 4.3 H13.6 M9 6.4 H13.6 M9 8.5 H13.6 M9 10.6 H13.6" stroke="#1e6e42" stroke-width="1"/><path d="M9.5 2.2 V11.8 M11.4 2.2 V11.8" stroke="#1e6e42" stroke-width="0.9" stroke-opacity="0.6"/><path d="M2.3 4.3 L5.8 9.7 M5.8 4.3 L2.3 9.7" stroke="#fff" stroke-width="1.5"/></g><g transform="translate(17,3.0)"><path d="M0 4 H8.2 M4.2 0.4 L8.6 4 L4.2 7.6" fill="none" stroke="#3aa57b" stroke-width="2.1" stroke-linejoin="round" stroke-linecap="butt"/></g><path transform="translate(28,1)" d="M0 0 H20 L12.5 12 H0 Z" fill="#00b0f0"/></svg>
<div style="position:absolute;left:724px;top:264px;font:11px 'Liberation Sans', sans-serif;line-height:13px;white-space:pre;color:#3b3b3b;">A</div>
<div style="position:absolute;left:1128px;top:264px;font:11px 'Liberation Sans', sans-serif;line-height:13px;white-space:pre;color:#3b3b3b;transform:scaleX(0.9236);transform-origin:left;letter-spacing:-0.402px;">CHAR</div>
<div style="position:absolute;right:12px;top:264px;font:11px 'Liberation Sans', sans-serif;line-height:13px;white-space:pre;color:#3b3b3b;transform:scaleX(0.9819);transform-origin:right;letter-spacing:-0.074px;">18</div>
<div style="position:absolute;left:38px;top:281px;width:1236px;height:20px;background:#c4c4fc;"></div>
<div style="position:absolute;left:8px;top:281px;width:29px;height:21px;background:#f5f5f5;"></div>
<div style="position:absolute;left:38px;top:301px;width:1236px;height:1px;background:#d4d4d4;"></div>
<svg style="position:absolute;left:63px;top:284px;" width="13" height="13" viewBox="0 0 13 13"><rect x="0.5" y="0.5" width="12" height="12" fill="#fff" stroke="#9a9a9a"/><path d="M1.9 6.2 L3.4 5.1 L5.2 7.3 L10.3 2.4 L11.3 4.1 L5.3 10.5 Z" fill="#353535"/></svg>
<svg style="position:absolute;left:115px;top:284px;" width="20" height="14" viewBox="0 0 20 14"><rect x="0" y="0" width="19" height="14" fill="#fff"/><path d="M0.5 0 V13.5 H19" fill="none" stroke="#4a4a4a" stroke-width="1"/><path d="M18.5 3 V13" stroke="#a8a8b8" stroke-width="1"/><rect x="0" y="0" width="19" height="3" fill="#2f6db3"/></svg>
<div style="position:absolute;left:141px;top:285px;font:11px 'Liberation Sans', sans-serif;line-height:13px;white-space:pre;color:#3b3b3b;transform:scaleX(0.9477);transform-origin:left;letter-spacing:-0.231px;">SAPLMGMM - 0070</div>
<div style="position:absolute;left:38px;top:302px;width:1236px;height:20px;background:#fcca98;"></div>
<div style="position:absolute;left:8px;top:302px;width:29px;height:21px;background:#f5f5f5;"></div>
<div style="position:absolute;left:38px;top:322px;width:1236px;height:1px;background:#d4d4d4;"></div>
<svg style="position:absolute;left:63px;top:305px;" width="13" height="13" viewBox="0 0 13 13"><rect x="0.5" y="0.5" width="12" height="12" fill="#fff" stroke="#9a9a9a"/><path d="M1.9 6.2 L3.4 5.1 L5.2 7.3 L10.3 2.4 L11.3 4.1 L5.3 10.5 Z" fill="#353535"/></svg>
<div style="position:absolute;left:273px;top:306px;font:11px 'Liberation Sans', sans-serif;line-height:13px;white-space:pre;color:#3b3b3b;transform:scaleX(0.9436);transform-origin:left;letter-spacing:-0.292px;">BDC_CURSOR</div>
<div style="position:absolute;left:437px;top:306px;font:11px 'Liberation Sans', sans-serif;line-height:13px;white-space:pre;color:#3b3b3b;transform:scaleX(0.9805);transform-origin:left;letter-spacing:-0.064px;">Cursor location</div>
<svg style="position:absolute;left:639px;top:305px;" width="50" height="14" viewBox="0 0 50 14"><g transform="translate(11.2,2.85) rotate(45) scale(1.0)"><path d="M0 8.2 L0 14.8" stroke="#777" stroke-width="0.9"/><path d="M-3.7 0 H3.7 L2 2.6 V5 L4.6 8.2 H-4.6 L-2 5 V2.6 Z" fill="#8b4fb3"/></g><g transform="translate(17,3.0)"><path d="M0 4 H8.2 M4.2 0.4 L8.6 4 L4.2 7.6" fill="none" stroke="#3aa57b" stroke-width="2.1" stroke-linejoin="round" stroke-linecap="butt"/></g><path transform="translate(28,1)" d="M0 0 H20 L12.5 12 H0 Z" fill="#00b0f0"/></svg>
<div style="position:absolute;left:724px;top:306px;font:11px 'Liberation Sans', sans-serif;line-height:13px;white-space:pre;color:#3b3b3b;transform:scaleX(0.9541);transform-origin:left;letter-spacing:-0.206px;">MSICHTAUSW-DYTXT(01)</div>
<div style="position:absolute;left:1128px;top:306px;font:11px 'Liberation Sans', sans-serif;line-height:13px;white-space:pre;color:#3b3b3b;transform:scaleX(0.9236);transform-origin:left;letter-spacing:-0.402px;">CHAR</div>
<div style="position:absolute;right:12px;top:306px;font:11px 'Liberation Sans', sans-serif;line-height:13px;white-space:pre;color:#3b3b3b;transform:scaleX(0.9819);transform-origin:right;letter-spacing:-0.074px;">30</div>
<div style="position:absolute;left:38px;top:323px;width:1236px;height:20px;background:#fcca98;"></div>
<div style="position:absolute;left:8px;top:323px;width:29px;height:21px;background:#f5f5f5;"></div>
<div style="position:absolute;left:38px;top:343px;width:1236px;height:1px;background:#d4d4d4;"></div>
<svg style="position:absolute;left:63px;top:326px;" width="13" height="13" viewBox="0 0 13 13"><rect x="0.5" y="0.5" width="12" height="12" fill="#fff" stroke="#9a9a9a"/><path d="M1.9 6.2 L3.4 5.1 L5.2 7.3 L10.3 2.4 L11.3 4.1 L5.3 10.5 Z" fill="#353535"/></svg>
<div style="position:absolute;left:273px;top:327px;font:11px 'Liberation Sans', sans-serif;line-height:13px;white-space:pre;color:#3b3b3b;transform:scaleX(0.9435);transform-origin:left;letter-spacing:-0.293px;">BDC_OKCODE</div>
<div style="position:absolute;left:437px;top:327px;font:11px 'Liberation Sans', sans-serif;line-height:13px;white-space:pre;color:#3b3b3b;transform:scaleX(0.9873);transform-origin:left;letter-spacing:-0.043px;">OK Code for this screen</div>
<svg style="position:absolute;left:639px;top:326px;" width="50" height="14" viewBox="0 0 50 14"><g transform="translate(11.2,2.85) rotate(45) scale(1.0)"><path d="M0 8.2 L0 14.8" stroke="#777" stroke-width="0.9"/><path d="M-3.7 0 H3.7 L2 2.6 V5 L4.6 8.2 H-4.6 L-2 5 V2.6 Z" fill="#8b4fb3"/></g><g transform="translate(17,3.0)"><path d="M0 4 H8.2 M4.2 0.4 L8.6 4 L4.2 7.6" fill="none" stroke="#3aa57b" stroke-width="2.1" stroke-linejoin="round" stroke-linecap="butt"/></g><path transform="translate(28,1)" d="M0 0 H20 L12.5 12 H0 Z" fill="#00b0f0"/></svg>
<div style="position:absolute;left:724px;top:327px;font:11px 'Liberation Sans', sans-serif;line-height:13px;white-space:pre;color:#3b3b3b;transform:scaleX(0.9679);transform-origin:left;letter-spacing:-0.156px;">=ENTR</div>
<div style="position:absolute;left:1128px;top:327px;font:11px 'Liberation Sans', sans-serif;line-height:13px;white-space:pre;color:#3b3b3b;transform:scaleX(0.9236);transform-origin:left;letter-spacing:-0.402px;">CHAR</div>
<div style="position:absolute;right:12px;top:327px;font:11px 'Liberation Sans', sans-serif;line-height:13px;white-space:pre;color:#3b3b3b;transform:scaleX(0.9819);transform-origin:right;letter-spacing:-0.074px;">20</div>
<div style="position:absolute;left:38px;top:344px;width:1236px;height:20px;background:#fcca98;"></div>
<div style="position:absolute;left:8px;top:344px;width:29px;height:21px;background:#f5f5f5;"></div>
<div style="position:absolute;left:38px;top:364px;width:1236px;height:1px;background:#d4d4d4;"></div>
<svg style="position:absolute;left:63px;top:347px;" width="13" height="13" viewBox="0 0 13 13"><rect x="0.5" y="0.5" width="12" height="12" fill="#fff" stroke="#9a9a9a"/><path d="M1.9 6.2 L3.4 5.1 L5.2 7.3 L10.3 2.4 L11.3 4.1 L5.3 10.5 Z" fill="#353535"/></svg>
<div style="position:absolute;left:273px;top:348px;font:11px 'Liberation Sans', sans-serif;line-height:13px;white-space:pre;color:#3b3b3b;transform:scaleX(0.9543);transform-origin:left;letter-spacing:-0.203px;">MSICHTAUSW-KZSEL(01)</div>
<div style="position:absolute;left:437px;top:348px;font:11px 'Liberation Sans', sans-serif;line-height:13px;white-space:pre;color:#3b3b3b;transform:scaleX(0.9693);transform-origin:left;letter-spacing:-0.126px;">Checkbox</div>
<svg style="position:absolute;left:639px;top:347px;" width="50" height="14" viewBox="0 0 50 14"><g transform="translate(11.2,2.85) rotate(45) scale(1.0)"><path d="M0 8.2 L0 14.8" stroke="#777" stroke-width="0.9"/><path d="M-3.7 0 H3.7 L2 2.6 V5 L4.6 8.2 H-4.6 L-2 5 V2.6 Z" fill="#8b4fb3"/></g><g transform="translate(17,3.0)"><path d="M0 4 H8.2 M4.2 0.4 L8.6 4 L4.2 7.6" fill="none" stroke="#3aa57b" stroke-width="2.1" stroke-linejoin="round" stroke-linecap="butt"/></g><path transform="translate(28,1)" d="M0 0 H20 L12.5 12 H0 Z" fill="#00b0f0"/></svg>
<div style="position:absolute;left:724px;top:348px;font:11px 'Liberation Sans', sans-serif;line-height:13px;white-space:pre;color:#3b3b3b;">X</div>
<div style="position:absolute;left:1128px;top:348px;font:11px 'Liberation Sans', sans-serif;line-height:13px;white-space:pre;color:#3b3b3b;transform:scaleX(0.9236);transform-origin:left;letter-spacing:-0.402px;">CHAR</div>
<div style="position:absolute;right:12px;top:348px;font:11px 'Liberation Sans', sans-serif;line-height:13px;white-space:pre;color:#3b3b3b;">1</div>
<div style="position:absolute;left:38px;top:365px;width:1236px;height:20px;background:#c4c4fc;"></div>
<div style="position:absolute;left:8px;top:365px;width:29px;height:21px;background:#f5f5f5;"></div>
<div style="position:absolute;left:38px;top:385px;width:1236px;height:1px;background:#d4d4d4;"></div>
<svg style="position:absolute;left:63px;top:368px;" width="13" height="13" viewBox="0 0 13 13"><rect x="0.5" y="0.5" width="12" height="12" fill="#fff" stroke="#9a9a9a"/><path d="M1.9 6.2 L3.4 5.1 L5.2 7.3 L10.3 2.4 L11.3 4.1 L5.3 10.5 Z" fill="#353535"/></svg>
<svg style="position:absolute;left:115px;top:368px;" width="20" height="14" viewBox="0 0 20 14"><rect x="0" y="0" width="19" height="14" fill="#fff"/><path d="M0.5 0 V13.5 H19" fill="none" stroke="#4a4a4a" stroke-width="1"/><path d="M18.5 3 V13" stroke="#a8a8b8" stroke-width="1"/><rect x="0" y="0" width="19" height="3" fill="#2f6db3"/></svg>
<div style="position:absolute;left:141px;top:369px;font:11px 'Liberation Sans', sans-serif;line-height:13px;white-space:pre;color:#3b3b3b;transform:scaleX(0.9477);transform-origin:left;letter-spacing:-0.231px;">SAPLMGMM - 4004</div>
<div style="position:absolute;left:38px;top:386px;width:1236px;height:20px;background:#fcca98;"></div>
<div style="position:absolute;left:8px;top:386px;width:29px;height:21px;background:#f5f5f5;"></div>
<div style="position:absolute;left:38px;top:406px;width:1236px;height:1px;background:#d4d4d4;"></div>
<svg style="position:absolute;left:63px;top:389px;" width="13" height="13" viewBox="0 0 13 13"><rect x="0.5" y="0.5" width="12" height="12" fill="#fff" stroke="#9a9a9a"/><path d="M1.9 6.2 L3.4 5.1 L5.2 7.3 L10.3 2.4 L11.3 4.1 L5.3 10.5 Z" fill="#353535"/></svg>
<div style="position:absolute;left:273px;top:390px;font:11px 'Liberation Sans', sans-serif;line-height:13px;white-space:pre;color:#3b3b3b;transform:scaleX(0.9435);transform-origin:left;letter-spacing:-0.293px;">BDC_OKCODE</div>
<div style="position:absolute;left:437px;top:390px;font:11px 'Liberation Sans', sans-serif;line-height:13px;white-space:pre;color:#3b3b3b;transform:scaleX(0.9873);transform-origin:left;letter-spacing:-0.043px;">OK Code for this screen</div>
<svg style="position:absolute;left:639px;top:389px;" width="50" height="14" viewBox="0 0 50 14"><g transform="translate(11.2,2.85) rotate(45) scale(1.0)"><path d="M0 8.2 L0 14.8" stroke="#777" stroke-width="0.9"/><path d="M-3.7 0 H3.7 L2 2.6 V5 L4.6 8.2 H-4.6 L-2 5 V2.6 Z" fill="#8b4fb3"/></g><g transform="translate(17,3.0)"><path d="M0 4 H8.2 M4.2 0.4 L8.6 4 L4.2 7.6" fill="none" stroke="#3aa57b" stroke-width="2.1" stroke-linejoin="round" stroke-linecap="butt"/></g><path transform="translate(28,1)" d="M0 0 H20 L12.5 12 H0 Z" fill="#00b0f0"/></svg>
<div style="position:absolute;left:724px;top:390px;font:11px 'Liberation Sans', sans-serif;line-height:13px;white-space:pre;color:#3b3b3b;transform:scaleX(0.9967);transform-origin:left;letter-spacing:-0.016px;">=BU</div>
<div style="position:absolute;left:1128px;top:390px;font:11px 'Liberation Sans', sans-serif;line-height:13px;white-space:pre;color:#3b3b3b;transform:scaleX(0.9236);transform-origin:left;letter-spacing:-0.402px;">CHAR</div>
<div style="position:absolute;right:12px;top:390px;font:11px 'Liberation Sans', sans-serif;line-height:13px;white-space:pre;color:#3b3b3b;transform:scaleX(0.9819);transform-origin:right;letter-spacing:-0.074px;">20</div>
<div style="position:absolute;left:38px;top:407px;width:1236px;height:20px;background:#fcca98;"></div>
<div style="position:absolute;left:8px;top:407px;width:29px;height:21px;background:#f5f5f5;"></div>
<div style="position:absolute;left:38px;top:427px;width:1236px;height:1px;background:#d4d4d4;"></div>
<svg style="position:absolute;left:63px;top:410px;" width="13" height="13" viewBox="0 0 13 13"><rect x="0.5" y="0.5" width="12" height="12" fill="#fff" stroke="#9a9a9a"/><path d="M1.9 6.2 L3.4 5.1 L5.2 7.3 L10.3 2.4 L11.3 4.1 L5.3 10.5 Z" fill="#353535"/></svg>
<div style="position:absolute;left:273px;top:411px;font:11px 'Liberation Sans', sans-serif;line-height:13px;white-space:pre;color:#3b3b3b;transform:scaleX(0.9436);transform-origin:left;letter-spacing:-0.292px;">BDC_CURSOR</div>
<div style="position:absolute;left:437px;top:411px;font:11px 'Liberation Sans', sans-serif;line-height:13px;white-space:pre;color:#3b3b3b;transform:scaleX(0.9805);transform-origin:left;letter-spacing:-0.064px;">Cursor location</div>
<svg style="position:absolute;left:639px;top:410px;" width="50" height="14" viewBox="0 0 50 14"><g transform="translate(11.2,2.85) rotate(45) scale(1.0)"><path d="M0 8.2 L0 14.8" stroke="#777" stroke-width="0.9"/><path d="M-3.7 0 H3.7 L2 2.6 V5 L4.6 8.2 H-4.6 L-2 5 V2.6 Z" fill="#8b4fb3"/></g><g transform="translate(17,3.0)"><path d="M0 4 H8.2 M4.2 0.4 L8.6 4 L4.2 7.6" fill="none" stroke="#3aa57b" stroke-width="2.1" stroke-linejoin="round" stroke-linecap="butt"/></g><path transform="translate(28,1)" d="M0 0 H20 L12.5 12 H0 Z" fill="#00b0f0"/></svg>
<div style="position:absolute;left:724px;top:411px;font:11px 'Liberation Sans', sans-serif;line-height:13px;white-space:pre;color:#3b3b3b;transform:scaleX(0.9357);transform-origin:left;letter-spacing:-0.331px;">MARA-NTGEW</div>
<div style="position:absolute;left:1128px;top:411px;font:11px 'Liberation Sans', sans-serif;line-height:13px;white-space:pre;color:#3b3b3b;transform:scaleX(0.9236);transform-origin:left;letter-spacing:-0.402px;">CHAR</div>
<div style="position:absolute;right:12px;top:411px;font:11px 'Liberation Sans', sans-serif;line-height:13px;white-space:pre;color:#3b3b3b;transform:scaleX(0.9819);transform-origin:right;letter-spacing:-0.074px;">30</div>
<div style="position:absolute;left:38px;top:428px;width:1236px;height:20px;background:#cce4f7;"></div>
<div style="position:absolute;left:8px;top:428px;width:29px;height:21px;background:#f5f5f5;"></div>
<div style="position:absolute;left:38px;top:448px;width:1236px;height:1px;background:#d4d4d4;"></div>
<svg style="position:absolute;left:63px;top:431px;" width="13" height="13" viewBox="0 0 13 13"><rect x="0.5" y="0.5" width="12" height="12" fill="#fff" stroke="#9a9a9a"/><path d="M1.9 6.2 L3.4 5.1 L5.2 7.3 L10.3 2.4 L11.3 4.1 L5.3 10.5 Z" fill="#353535"/></svg>
<div style="position:absolute;left:273px;top:432px;font:11px 'Liberation Sans', sans-serif;line-height:13px;white-space:pre;color:#3b3b3b;transform:scaleX(0.9412);transform-origin:left;letter-spacing:-0.283px;">MAKT-MAKTX</div>
<div style="position:absolute;left:437px;top:432px;font:11px 'Liberation Sans', sans-serif;line-height:13px;white-space:pre;color:#3b3b3b;transform:scaleX(0.9932);transform-origin:left;letter-spacing:-0.022px;">Material Description (Short Text)</div>
<div style="position:absolute;left:724px;top:432px;font:11px 'Liberation Sans', sans-serif;line-height:13px;white-space:pre;color:#3b3b3b;">B</div>
<div style="position:absolute;left:1128px;top:432px;font:11px 'Liberation Sans', sans-serif;line-height:13px;white-space:pre;color:#3b3b3b;transform:scaleX(0.9236);transform-origin:left;letter-spacing:-0.402px;">CHAR</div>
<div style="position:absolute;right:12px;top:432px;font:11px 'Liberation Sans', sans-serif;line-height:13px;white-space:pre;color:#3b3b3b;transform:scaleX(0.9819);transform-origin:right;letter-spacing:-0.074px;">40</div>
<div style="position:absolute;left:38px;top:449px;width:1236px;height:20px;background:#ccfcca;"></div>
<div style="position:absolute;left:8px;top:449px;width:29px;height:21px;background:#f5f5f5;"></div>
<div style="position:absolute;left:38px;top:469px;width:1236px;height:1px;background:#d4d4d4;"></div>
<svg style="position:absolute;left:63px;top:452px;" width="13" height="13" viewBox="0 0 13 13"><rect x="0.5" y="0.5" width="12" height="12" fill="#fff" stroke="#9a9a9a"/><path d="M1.9 6.2 L3.4 5.1 L5.2 7.3 L10.3 2.4 L11.3 4.1 L5.3 10.5 Z" fill="#353535"/></svg>
<div style="position:absolute;left:273px;top:453px;font:11px 'Liberation Sans', sans-serif;line-height:13px;white-space:pre;color:#3b3b3b;transform:scaleX(0.9428);transform-origin:left;letter-spacing:-0.274px;">MARA-MATKL</div>
<div style="position:absolute;left:437px;top:453px;font:11px 'Liberation Sans', sans-serif;line-height:13px;white-space:pre;color:#3b3b3b;transform:scaleX(0.9733);transform-origin:left;letter-spacing:-0.093px;">Material Group</div>
<svg style="position:absolute;left:639px;top:452px;" width="50" height="14" viewBox="0 0 50 14"><g transform="translate(1,0)"><path d="M0 1.5 L8 0 L8.6 1.4 H14.2 V12.6 H8.6 L8 14 L0 12.5 Z" fill="#1e6e42"/><rect x="9" y="2.2" width="4.6" height="9.6" fill="#ffffff"/><path d="M9 4.3 H13.6 M9 6.4 H13.6 M9 8.5 H13.6 M9 10.6 H13.6" stroke="#1e6e42" stroke-width="1"/><path d="M9.5 2.2 V11.8 M11.4 2.2 V11.8" stroke="#1e6e42" stroke-width="0.9" stroke-opacity="0.6"/><path d="M2.3 4.3 L5.8 9.7 M5.8 4.3 L2.3 9.7" stroke="#fff" stroke-width="1.5"/></g><g transform="translate(17,3.0)"><path d="M0 4 H8.2 M4.2 0.4 L8.6 4 L4.2 7.6" fill="none" stroke="#3aa57b" stroke-width="2.1" stroke-linejoin="round" stroke-linecap="butt"/></g><path transform="translate(28,1)" d="M0 0 H20 L12.5 12 H0 Z" fill="#00b0f0"/></svg>
<div style="position:absolute;left:1128px;top:453px;font:11px 'Liberation Sans', sans-serif;line-height:13px;white-space:pre;color:#3b3b3b;transform:scaleX(0.9236);transform-origin:left;letter-spacing:-0.402px;">CHAR</div>
<div style="position:absolute;right:12px;top:453px;font:11px 'Liberation Sans', sans-serif;line-height:13px;white-space:pre;color:#3b3b3b;">9</div>
<div style="position:absolute;left:38px;top:470px;width:1236px;height:20px;background:#ccfcca;"></div>
<div style="position:absolute;left:8px;top:470px;width:29px;height:21px;background:#f5f5f5;"></div>
<div style="position:absolute;left:38px;top:490px;width:1236px;height:1px;background:#d4d4d4;"></div>
<svg style="position:absolute;left:63px;top:473px;" width="13" height="13" viewBox="0 0 13 13"><rect x="0.5" y="0.5" width="12" height="12" fill="#fff" stroke="#9a9a9a"/><path d="M1.9 6.2 L3.4 5.1 L5.2 7.3 L10.3 2.4 L11.3 4.1 L5.3 10.5 Z" fill="#353535"/></svg>
<div style="position:absolute;left:273px;top:474px;font:11px 'Liberation Sans', sans-serif;line-height:13px;white-space:pre;color:#3b3b3b;transform:scaleX(0.9356);transform-origin:left;letter-spacing:-0.334px;">MARA-BRGEW</div>
<div style="position:absolute;left:437px;top:474px;font:11px 'Liberation Sans', sans-serif;line-height:13px;white-space:pre;color:#3b3b3b;transform:scaleX(0.9735);transform-origin:left;letter-spacing:-0.098px;">Gross Weight</div>
<svg style="position:absolute;left:639px;top:473px;" width="50" height="14" viewBox="0 0 50 14"><g transform="translate(1,0)"><path d="M0 1.5 L8 0 L8.6 1.4 H14.2 V12.6 H8.6 L8 14 L0 12.5 Z" fill="#1e6e42"/><rect x="9" y="2.2" width="4.6" height="9.6" fill="#ffffff"/><path d="M9 4.3 H13.6 M9 6.4 H13.6 M9 8.5 H13.6 M9 10.6 H13.6" stroke="#1e6e42" stroke-width="1"/><path d="M9.5 2.2 V11.8 M11.4 2.2 V11.8" stroke="#1e6e42" stroke-width="0.9" stroke-opacity="0.6"/><path d="M2.3 4.3 L5.8 9.7 M5.8 4.3 L2.3 9.7" stroke="#fff" stroke-width="1.5"/></g><g transform="translate(17,3.0)"><path d="M0 4 H8.2 M4.2 0.4 L8.6 4 L4.2 7.6" fill="none" stroke="#3aa57b" stroke-width="2.1" stroke-linejoin="round" stroke-linecap="butt"/></g><path transform="translate(28,1)" d="M0 0 H20 L12.5 12 H0 Z" fill="#00b0f0"/></svg>
<div style="position:absolute;left:1128px;top:474px;font:11px 'Liberation Sans', sans-serif;line-height:13px;white-space:pre;color:#3b3b3b;transform:scaleX(0.9234);transform-origin:left;letter-spacing:-0.401px;">BCD</div>
<div style="position:absolute;right:12px;top:474px;font:11px 'Liberation Sans', sans-serif;line-height:13px;white-space:pre;color:#3b3b3b;transform:scaleX(1.0086);transform-origin:right;letter-spacing:0.031px;">13.3</div>
<div style="position:absolute;left:38px;top:491px;width:1236px;height:20px;background:#ccfcca;"></div>
<div style="position:absolute;left:8px;top:491px;width:29px;height:21px;background:#f5f5f5;"></div>
<div style="position:absolute;left:38px;top:511px;width:1236px;height:1px;background:#d4d4d4;"></div>
<svg style="position:absolute;left:63px;top:494px;" width="13" height="13" viewBox="0 0 13 13"><rect x="0.5" y="0.5" width="12" height="12" fill="#fff" stroke="#9a9a9a"/><path d="M1.9 6.2 L3.4 5.1 L5.2 7.3 L10.3 2.4 L11.3 4.1 L5.3 10.5 Z" fill="#353535"/></svg>
<div style="position:absolute;left:273px;top:495px;font:11px 'Liberation Sans', sans-serif;line-height:13px;white-space:pre;color:#3b3b3b;transform:scaleX(0.9357);transform-origin:left;letter-spacing:-0.331px;">MARA-NTGEW</div>
<div style="position:absolute;left:437px;top:495px;font:11px 'Liberation Sans', sans-serif;line-height:13px;white-space:pre;color:#3b3b3b;transform:scaleX(0.9731);transform-origin:left;letter-spacing:-0.098px;">Net Weight</div>
<svg style="position:absolute;left:639px;top:494px;" width="50" height="14" viewBox="0 0 50 14"><g transform="translate(1,0)"><path d="M0 1.5 L8 0 L8.6 1.4 H14.2 V12.6 H8.6 L8 14 L0 12.5 Z" fill="#1e6e42"/><rect x="9" y="2.2" width="4.6" height="9.6" fill="#ffffff"/><path d="M9 4.3 H13.6 M9 6.4 H13.6 M9 8.5 H13.6 M9 10.6 H13.6" stroke="#1e6e42" stroke-width="1"/><path d="M9.5 2.2 V11.8 M11.4 2.2 V11.8" stroke="#1e6e42" stroke-width="0.9" stroke-opacity="0.6"/><path d="M2.3 4.3 L5.8 9.7 M5.8 4.3 L2.3 9.7" stroke="#fff" stroke-width="1.5"/></g><g transform="translate(17,3.0)"><path d="M0 4 H8.2 M4.2 0.4 L8.6 4 L4.2 7.6" fill="none" stroke="#3aa57b" stroke-width="2.1" stroke-linejoin="round" stroke-linecap="butt"/></g><path transform="translate(28,1)" d="M0 0 H20 L12.5 12 H0 Z" fill="#00b0f0"/></svg>
<div style="position:absolute;left:1128px;top:495px;font:11px 'Liberation Sans', sans-serif;line-height:13px;white-space:pre;color:#3b3b3b;transform:scaleX(0.9234);transform-origin:left;letter-spacing:-0.401px;">BCD</div>
<div style="position:absolute;right:12px;top:495px;font:11px 'Liberation Sans', sans-serif;line-height:13px;white-space:pre;color:#3b3b3b;transform:scaleX(1.0086);transform-origin:right;letter-spacing:0.031px;">13.3</div>
<div style="position:absolute;left:37px;top:155px;width:1px;height:40px;background:#d0d0d0;"></div>
<div style="position:absolute;left:37px;top:197px;width:1px;height:315px;background:#d4d4d4;"></div>
<div style="position:absolute;left:100px;top:155px;width:1px;height:40px;background:#d0d0d0;"></div>
<div style="position:absolute;left:100px;top:197px;width:1px;height:315px;background:#d4d4d4;"></div>
<div style="position:absolute;left:269px;top:155px;width:1px;height:40px;background:#d0d0d0;"></div>
<div style="position:absolute;left:269px;top:197px;width:1px;height:315px;background:#d4d4d4;"></div>
<div style="position:absolute;left:433px;top:155px;width:1px;height:40px;background:#d0d0d0;"></div>
<div style="position:absolute;left:433px;top:197px;width:1px;height:315px;background:#d4d4d4;"></div>
<div style="position:absolute;left:605px;top:155px;width:1px;height:40px;background:#d0d0d0;"></div>
<div style="position:absolute;left:605px;top:197px;width:1px;height:315px;background:#d4d4d4;"></div>
<div style="position:absolute;left:720px;top:155px;width:1px;height:40px;background:#d0d0d0;"></div>
<div style="position:absolute;left:720px;top:197px;width:1px;height:315px;background:#d4d4d4;"></div>
<div style="position:absolute;left:864px;top:155px;width:1px;height:40px;background:#d0d0d0;"></div>
<div style="position:absolute;left:864px;top:197px;width:1px;height:315px;background:#d4d4d4;"></div>
<div style="position:absolute;left:980px;top:155px;width:1px;height:40px;background:#d0d0d0;"></div>
<div style="position:absolute;left:980px;top:197px;width:1px;height:315px;background:#d4d4d4;"></div>
<div style="position:absolute;left:1124px;top:155px;width:1px;height:40px;background:#d0d0d0;"></div>
<div style="position:absolute;left:1124px;top:197px;width:1px;height:315px;background:#d4d4d4;"></div>
<div style="position:absolute;left:1186px;top:155px;width:1px;height:40px;background:#d0d0d0;"></div>
<div style="position:absolute;left:1186px;top:197px;width:1px;height:315px;background:#d4d4d4;"></div>
<div style="position:absolute;left:37px;top:197px;width:1px;height:315px;background:#d0d0d0;"></div>
<svg style="position:absolute;left:63px;top:178px;" width="13" height="13" viewBox="0 0 13 13"><rect x="0.5" y="0.5" width="12" height="12" fill="#fff" stroke="#9a9a9a"/><rect x="3" y="3" width="7" height="7" fill="#3a3a3a"/></svg>
<svg style="position:absolute;left:14px;top:159px;" width="17" height="17" viewBox="0 0 17 17"><path d="M0 0 H14.5 L11 3.5 H3.5 V10.5 L0 14 Z" fill="#2d62ad"/><path d="M0.5 13 V0.5 H13.5" fill="none" stroke="#173e7e" stroke-width="1"/><path d="M2 11 V2 H11" fill="none" stroke="#a8c8f0" stroke-width="1"/><rect x="3.5" y="3.5" width="12" height="12" fill="#8e9c2c" stroke="#5c6614" stroke-width="1"/><rect x="4" y="4" width="11" height="2.5" fill="#c9d46a"/><rect x="4" y="6.5" width="2.5" height="8.5" fill="#d7e08a"/><rect x="7" y="7" width="8" height="8" fill="#ececec"/><path d="M7 10.5 H15.5 M7 15.5 H15.5" stroke="#555" stroke-width="1"/></svg>
<svg style="position:absolute;left:90px;top:158px;" width="8" height="8" viewBox="0 0 8 8"><path d="M0.2 1.6 L3.6 5 L7 1.6 Z" fill="#1a73c9"/><path d="M2.9 4 H4.3 V6.8 H2.9 Z" fill="#1a73c9"/><ellipse cx="3.6" cy="1.5" rx="3.1" ry="1.05" fill="#dbeaf8" stroke="#1a73c9" stroke-width="0.9"/></svg>
<svg style="position:absolute;left:15px;top:182px;" width="7" height="8" viewBox="0 0 7 8"><path d="M0.3 2.2 L2.6 4.8 V7 H3.4 V4.8 L5.7 2.2 Z" fill="#4a4a4a"/><ellipse cx="3" cy="1.7" rx="2.5" ry="1.2" fill="#e8e8e8" stroke="#444" stroke-width="1"/></svg>
<svg style="position:absolute;left:13px;top:432px;" width="11" height="13" viewBox="0 0 11 13"><path d="M1.5 11.5 L3.4 4.2 Q4.4 1.2 6.4 1.2 Q8.7 1.4 7.9 3.8 L4.3 11.5 Z" fill="none" stroke="#3a3a3a" stroke-width="1.1"/><path d="M3.6 4.4 L7.8 3.6" stroke="#3a3a3a" stroke-width="1"/><rect x="5" y="10.8" width="1.2" height="1.2" fill="#3a3a3a"/><rect x="7.2" y="10.8" width="1.2" height="1.2" fill="#3a3a3a"/></svg>
<div style="position:absolute;left:38px;top:427px;width:684px;height:1px;background:#f00a0a;"></div>
<div style="position:absolute;left:38px;top:448px;width:684px;height:1px;background:#f00a0a;"></div>
<div style="position:absolute;left:38px;top:427px;width:1px;height:22px;background:#f00a0a;"></div>
<div style="position:absolute;left:721px;top:427px;width:1px;height:22px;background:#f00a0a;"></div>
<div style="position:absolute;left:607px;top:428px;width:96px;height:20px;background:#ffffff;"></div>
<div style="position:absolute;left:607px;top:428px;width:96px;height:1px;background:repeating-linear-gradient(90deg,#222 0 1px,transparent 1px 2px);"></div>
<div style="position:absolute;left:606px;top:428px;width:1px;height:20px;background:repeating-linear-gradient(180deg,#222 0 1px,transparent 1px 2px);"></div>
<div style="position:absolute;left:607px;top:427px;width:1px;height:22px;background:#f00a0a;"></div>
<div style="position:absolute;left:607px;top:427px;width:114px;height:1px;background:#f00a0a;"></div>
<svg style="position:absolute;left:631px;top:431px;" width="50" height="14" viewBox="0 0 50 14"><g transform="translate(1,0)"><path d="M0 1.5 L8 0 L8.6 1.4 H14.2 V12.6 H8.6 L8 14 L0 12.5 Z" fill="#1e6e42"/><rect x="9" y="2.2" width="4.6" height="9.6" fill="#ffffff"/><path d="M9 4.3 H13.6 M9 6.4 H13.6 M9 8.5 H13.6 M9 10.6 H13.6" stroke="#1e6e42" stroke-width="1"/><path d="M9.5 2.2 V11.8 M11.4 2.2 V11.8" stroke="#1e6e42" stroke-width="0.9" stroke-opacity="0.6"/><path d="M2.3 4.3 L5.8 9.7 M5.8 4.3 L2.3 9.7" stroke="#fff" stroke-width="1.5"/></g><g transform="translate(17,3.0)"><path d="M0 4 H8.2 M4.2 0.4 L8.6 4 L4.2 7.6" fill="none" stroke="#3aa57b" stroke-width="2.1" stroke-linejoin="round" stroke-linecap="butt"/></g><path transform="translate(28,1)" d="M0 0 H20 L12.5 12 H0 Z" fill="#00b0f0"/></svg>
<div style="position:absolute;left:703px;top:428px;width:17px;height:20px;box-sizing:border-box;border:1px solid #f00a0a;background:linear-gradient(#d6ebfc,#c6def6);"></div>
<div style="position:absolute;left:720px;top:428px;width:1px;height:20px;background:#d0d0d0;"></div>
<div style="position:absolute;left:703px;top:447px;width:18px;height:1px;background:#f00a0a;"></div>
<svg style="position:absolute;left:707px;top:434px;" width="9" height="7" viewBox="0 0 9 7"><path d="M1.2 1.2 L4.5 4.8 L7.8 1.2" fill="none" stroke="#333" stroke-width="2.3"/></svg>
<div style="position:absolute;left:612px;top:539px;width:136px;height:4px;background:rgba(0,0,0,0.22);filter:blur(1.5px);"></div>
<div style="position:absolute;left:607px;top:448px;width:139px;height:92px;box-sizing:border-box;border:1px solid #f00a0a;background:#ffffff;border-right-width:2px;border-bottom-width:2px;"></div>
<div style="position:absolute;left:609px;top:484px;width:134px;height:17px;background:#e0dc8b;"></div>
<div style="position:absolute;left:663px;top:451px;font:11px 'Liberation Sans', sans-serif;line-height:13px;white-space:pre;color:#3b3b3b;transform:scaleX(0.9592);transform-origin:left;letter-spacing:-0.152px;">Excel To SAP</div>
<div style="position:absolute;left:663px;top:469px;font:11px 'Liberation Sans', sans-serif;line-height:13px;white-space:pre;color:#3b3b3b;transform:scaleX(0.9610);transform-origin:left;letter-spacing:-0.144px;">SAP To Excel</div>
<div style="position:absolute;left:663px;top:487px;font:11px 'Liberation Sans', sans-serif;line-height:13px;white-space:pre;color:#222222;transform:scaleX(0.9639);transform-origin:left;letter-spacing:-0.119px;">Fix Single Value</div>
<div style="position:absolute;left:663px;top:505px;font:11px 'Liberation Sans', sans-serif;line-height:13px;white-space:pre;color:#3b3b3b;transform:scaleX(0.9723);transform-origin:left;letter-spacing:-0.104px;">System Value</div>
<div style="position:absolute;left:663px;top:523px;font:11px 'Liberation Sans', sans-serif;line-height:13px;white-space:pre;color:#3b3b3b;transform:scaleX(0.9595);transform-origin:left;letter-spacing:-0.135px;">Excel Cell Value</div>
<svg style="position:absolute;left:611px;top:450px;" width="50" height="14" viewBox="0 0 50 14"><g transform="translate(0,0)"><path d="M0 1.5 L8 0 L8.6 1.4 H14.2 V12.6 H8.6 L8 14 L0 12.5 Z" fill="#1e6e42"/><rect x="9" y="2.2" width="4.6" height="9.6" fill="#ffffff"/><path d="M9 4.3 H13.6 M9 6.4 H13.6 M9 8.5 H13.6 M9 10.6 H13.6" stroke="#1e6e42" stroke-width="1"/><path d="M9.5 2.2 V11.8 M11.4 2.2 V11.8" stroke="#1e6e42" stroke-width="0.9" stroke-opacity="0.6"/><path d="M2.3 4.3 L5.8 9.7 M5.8 4.3 L2.3 9.7" stroke="#fff" stroke-width="1.5"/></g><g transform="translate(16,3.0)"><path d="M0 4 H8.2 M4.2 0.4 L8.6 4 L4.2 7.6" fill="none" stroke="#3aa57b" stroke-width="2.1" stroke-linejoin="round" stroke-linecap="butt"/></g><path transform="translate(27,1)" d="M0 0 H20 L12.5 12 H0 Z" fill="#00b0f0"/></svg>
<svg style="position:absolute;left:611px;top:468px;" width="50" height="14" viewBox="0 0 50 14"><path transform="translate(0,1)" d="M0 0 H20 L12.5 12 H0 Z" fill="#00b0f0"/><g transform="translate(20,3.0)"><path d="M0 4 H8.2 M4.2 0.4 L8.6 4 L4.2 7.6" fill="none" stroke="#3aa57b" stroke-width="2.1" stroke-linejoin="round" stroke-linecap="butt"/></g><g transform="translate(31,0)"><path d="M0 1.5 L8 0 L8.6 1.4 H14.2 V12.6 H8.6 L8 14 L0 12.5 Z" fill="#1e6e42"/><rect x="9" y="2.2" width="4.6" height="9.6" fill="#ffffff"/><path d="M9 4.3 H13.6 M9 6.4 H13.6 M9 8.5 H13.6 M9 10.6 H13.6" stroke="#1e6e42" stroke-width="1"/><path d="M9.5 2.2 V11.8 M11.4 2.2 V11.8" stroke="#1e6e42" stroke-width="0.9" stroke-opacity="0.6"/><path d="M2.3 4.3 L5.8 9.7 M5.8 4.3 L2.3 9.7" stroke="#fff" stroke-width="1.5"/></g></svg>
<svg style="position:absolute;left:610px;top:486px;" width="50" height="14" viewBox="0 0 50 14"><g transform="translate(11.2,2.85) rotate(45) scale(1.0)"><path d="M0 8.2 L0 14.8" stroke="#777" stroke-width="0.9"/><path d="M-3.7 0 H3.7 L2 2.6 V5 L4.6 8.2 H-4.6 L-2 5 V2.6 Z" fill="#8b4fb3"/></g><g transform="translate(17,3.0)"><path d="M0 4 H8.2 M4.2 0.4 L8.6 4 L4.2 7.6" fill="none" stroke="#3aa57b" stroke-width="2.1" stroke-linejoin="round" stroke-linecap="butt"/></g><path transform="translate(28,1)" d="M0 0 H20 L12.5 12 H0 Z" fill="#00b38a"/></svg>
<svg style="position:absolute;left:611px;top:504px;" width="50" height="14" viewBox="0 0 50 14"><rect x="0" y="1" width="12.5" height="12" fill="#2f6db3"/><path d="M4.5 3v8M8 3v8M2.2 5.5h8M2.2 8.5h8" stroke="#fff" stroke-width="1.2"/><g transform="translate(16,3.0)"><path d="M0 4 H8.2 M4.2 0.4 L8.6 4 L4.2 7.6" fill="none" stroke="#3aa57b" stroke-width="2.1" stroke-linejoin="round" stroke-linecap="butt"/></g><path transform="translate(27,1)" d="M0 0 H20 L12.5 12 H0 Z" fill="#00b0f0"/></svg>
<svg style="position:absolute;left:611px;top:522px;" width="50" height="15" viewBox="0 0 50 15"><g transform="translate(0,1)"><path d="M0 1.5 L8 0 L8.6 1.4 H14.2 V12.6 H8.6 L8 14 L0 12.5 Z" fill="#1e6e42"/><rect x="9" y="2.2" width="4.6" height="9.6" fill="#ffffff"/><path d="M9 4.3 H13.6 M9 6.4 H13.6 M9 8.5 H13.6 M9 10.6 H13.6" stroke="#1e6e42" stroke-width="1"/><path d="M9.5 2.2 V11.8 M11.4 2.2 V11.8" stroke="#1e6e42" stroke-width="0.9" stroke-opacity="0.6"/><path d="M2.3 4.3 L5.8 9.7 M5.8 4.3 L2.3 9.7" stroke="#fff" stroke-width="1.5"/></g><g transform="translate(12.2,2.2) rotate(45) scale(0.75)"><path d="M0 8.2 L0 14.8" stroke="#777" stroke-width="0.9"/><path d="M-3.7 0 H3.7 L2 2.6 V5 L4.6 8.2 H-4.6 L-2 5 V2.6 Z" fill="#8b4fb3"/></g><g transform="translate(16,4.0)"><path d="M0 4 H8.2 M4.2 0.4 L8.6 4 L4.2 7.6" fill="none" stroke="#3aa57b" stroke-width="2.1" stroke-linejoin="round" stroke-linecap="butt"/></g><path transform="translate(27,2)" d="M0 0 H20 L12.5 12 H0 Z" fill="#00b0f0"/></svg>
<div style="position:absolute;left:0px;top:0px;width:1282px;height:1px;background:#05729e;"></div>
<div style="position:absolute;left:0px;top:0px;width:1px;height:573px;background:#05729e;"></div>
<div style="position:absolute;left:1281px;top:0px;width:1px;height:573px;background:#05729e;"></div>
<div style="position:absolute;left:0px;top:572px;width:1282px;height:1px;background:#05729e;"></div>
<div style="position:absolute;left:1px;top:1px;width:1280px;height:1px;background:#ffffff;"></div>
<div style="position:absolute;left:1px;top:1px;width:1px;height:32px;background:#ffffff;"></div>
</body></html>
